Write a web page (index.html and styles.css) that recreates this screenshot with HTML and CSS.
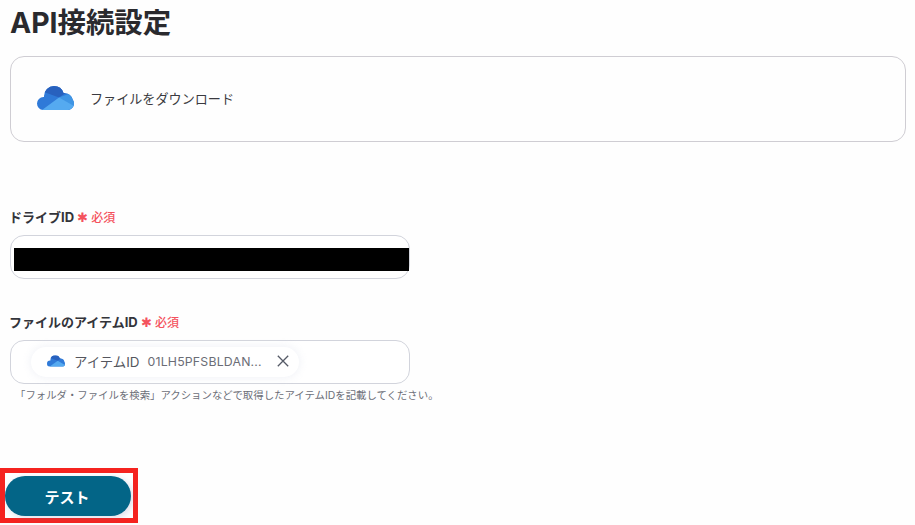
FILE: index.html
```html
<!DOCTYPE html>
<html lang="ja">
<head>
<meta charset="utf-8">
<title>API接続設定</title>
<link rel="stylesheet" href="styles.css">
</head>
<body>
<main class="page">
  <h1 class="title">API接続設定</h1>
  <section class="app-card">
    <svg class="cloud" viewBox="0 0 37 24" width="37" height="24" aria-hidden="true">
      <defs><clipPath id="c1">
        <circle cx="6.500" cy="17.500" r="6.500"/>
        <circle cx="17" cy="10" r="10"/>
        <circle cx="27.500" cy="15.500" r="8.500"/>
        <circle cx="30.500" cy="17.500" r="6.500"/>
        <rect x="6" y="14" width="24" height="10"/>
      </clipPath></defs>
      <g clip-path="url(#c1)">
        <rect width="37" height="24" fill="#2f7ad8"/>
        <path d="M6 0H30V6L22 11.500L7 6Z" fill="#2861be"/>
        <path d="M22 11.500L37 6V24H25Z" fill="#3f95e4"/>
        <path d="M5 24L22 11.500L37 20V24Z" fill="#55aaf0"/>
      </g>
    </svg>
    <span class="app-card-text">ファイルをダウンロード</span>
  </section>

  <section class="field field-drive">
    <label class="label">ドライブID <span class="req"><span class="star">✱</span> 必須</span></label>
    <div class="input"><div class="redact"></div></div>
  </section>

  <section class="field field-item">
    <label class="label">ファイルのアイテムID <span class="req"><span class="star">✱</span> 必須</span></label>
    <div class="input">
      <div class="chip">
        <svg class="chip-cloud" viewBox="0 0 37 24" width="18" height="12" aria-hidden="true">
          <g clip-path="url(#c1)">
            <rect width="37" height="24" fill="#2f7ad8"/>
            <path d="M6 0H30V6L22 11.500L7 6Z" fill="#2861be"/>
            <path d="M5 24L22 11.500L37 20V24Z" fill="#55aaf0"/>
          </g>
        </svg>
        <span class="chip-name">アイテムID</span>
        <span class="chip-value">01LH5PFSBLDAN...</span>
        <svg class="chip-close" viewBox="0 0 12 12" width="12" height="12" aria-hidden="true"><path d="M.8.8L11.200 11.200M11.200.8L.8 11.200" stroke="#555a66" stroke-width="1.300" fill="none"/></svg>
      </div>
    </div>
    <p class="help">「フォルダ・ファイルを検索」アクションなどで取得したアイテムIDを記載してください。</p>
  </section>

  <div class="action">
    <button class="test-btn" type="button">テスト</button>
  </div>
</main>
</body>
</html>
```
FILE: styles.css
```css
* { box-sizing: border-box; }
html, body { margin: 0; height: 100%; }
body {
  background: #fefefe;
  color: #2b2b2f;
  font-family: "Inter", "Noto Sans CJK JP", sans-serif;
  overflow: hidden;
}
.page { padding: 7px 9px 0 10px; }
.title {
  margin: 0;
  height: 31px;
  font-size: 28.400px;
  line-height: 31px;
  font-weight: 700;
  color: #2a2a2e;
}
.app-card {
  margin-top: 18px;
  height: 86px;
  border: 1px solid #cfcdd3;
  border-radius: 14px;
  display: flex;
  align-items: center;
  padding: 0 0 2px 26px;
  gap: 16px;
}
.app-card-text { font-size: 13.100px; color: #3a3a40; }
.field { width: 400px; }
.field-drive { margin-top: 66px; }
.field-item { margin-top: 34px; }
.label {
  display: block;
  height: 18px;
  margin-left: -1px;
  font-size: 13px;
  line-height: 18px;
  font-weight: 700;
  color: #33343a;
}
.req { color: #f4525d; font-size: 12px; font-weight: 500; }
.star { font-size: 13px; }
.input {
  margin-top: 9px;
  height: 44px;
  border: 1px solid #d2d4dc;
  border-radius: 14px;
  background: #fff;
  display: flex;
  align-items: center;
}
.redact {
  margin: 4px 0 0 3px;
  flex: 1;
  height: 23px;
  background: #000;
}
.chip {
  margin-left: 20px;
  height: 30px;
  width: 268px;
  padding: 0 10px 2px 16px;
  border-radius: 15px;
  background: #fff;
  box-shadow: 0 0 10px rgba(225, 228, 238, .6);
  display: flex;
  align-items: center;
}
.chip-name { margin-left: 9px; font-size: 13.400px; color: #55565e; }
.chip-value { margin-left: 8px; font-size: 12.300px; letter-spacing: .2px; color: #6b6d76; white-space: nowrap; }
.chip-close { margin-left: auto; }
.help {
  margin: 5px 0 0 5px;
  font-size: 10.400px;
  line-height: 13px;
  color: #6c6e78;
  white-space: nowrap;
}
.action {
  margin: 66px 0 0 -10px;
  width: 138px;
  height: 55px;
  border: 5px solid #f5231f;
  padding: 3px 0 0;
}
.test-btn {
  display: block;
  width: 126px;
  height: 40px;
  border: 0;
  border-radius: 20px;
  background: #036587;
  color: #fff;
  font-family: inherit;
  font-size: 15px;
  font-weight: 700;
  padding: 0 2px 0 0;
  box-shadow: 2px 2px 6px rgba(120, 125, 170, .25);
}
```
